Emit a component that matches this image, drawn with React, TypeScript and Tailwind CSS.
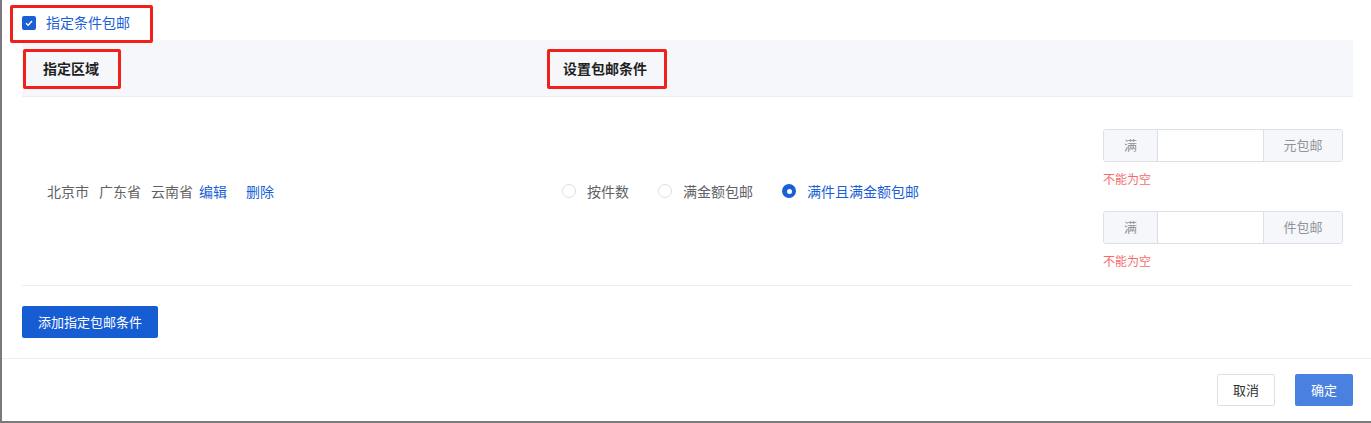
import React from "react"

const font = { fontFamily: '"Noto Sans CJK SC", "Noto Sans", sans-serif' }

function RedBox({ className }: { className: string }) {
  return <span className={`pointer-events-none absolute z-10 rounded-[2px] border-[3px] border-[#f0201a] ${className}`} />
}

function Radio({ label, checked }: { label: string; checked?: boolean }) {
  return (
    <label className="flex items-center gap-[11px]">
      {checked ? (
        <span className="flex h-[14px] w-[14px] items-center justify-center rounded-full bg-[#1a5fd6]">
          <span className="h-[5px] w-[5px] rounded-full bg-white" />
        </span>
      ) : (
        <span className="h-[14px] w-[14px] rounded-full border border-[#dcdfe6] bg-white" />
      )}
      <span className={checked ? "text-[#1a5fd6]" : "text-[#606266]"}>{label}</span>
    </label>
  )
}

function AmountInput({ suffix }: { suffix: string }) {
  return (
    <div>
      <div className="flex h-[33px] w-[240px] overflow-hidden rounded-[3px] border border-[#dcdfe6] text-[13px] text-[#909399]">
        <span className="flex w-[54px] items-center justify-center border-r border-[#dcdfe6] bg-[#f5f7fa]">满</span>
        <input className="w-[105px] bg-white px-2 outline-none" />
        <span className="flex flex-1 items-center justify-center border-l border-[#dcdfe6] bg-[#f5f7fa]">{suffix}</span>
      </div>
      <div className="mt-[8px] h-[18px] text-[12px] leading-[18px] text-[#f56c6c]">不能为空</div>
    </div>
  )
}

export default function App() {
  return (
    <div style={font} className="h-[423px] w-[1371px] overflow-hidden border-b-2 border-l-2 border-[#7a7a7a] bg-white text-[14px] text-[#303133]">
      <div className="relative z-10 flex h-[40px] items-center pt-[5px] pl-[20px]">
        <RedBox className="left-[8px] top-[5px] h-[38px] w-[143px]" />
        <span className="flex h-[14px] w-[14px] items-center justify-center rounded-[2px] bg-[#1a5fd6]">
          <svg width="10" height="10" viewBox="0 0 10 10" fill="none">
            <path d="M2 5.2 L4.2 7.3 L8 3" stroke="white" strokeWidth="1.4" />
          </svg>
        </span>
        <span className="ml-[10px] text-[#1a5fd6]">指定条件包邮</span>
      </div>

      <div className="mr-[18px] ml-[20px]">
        <div className="relative flex h-[57px] items-center border-b border-[#ebeef5] bg-[#f5f7fa] font-bold text-[#1f1f1f]">
          <RedBox className="left-[1px] top-[9px] h-[40px] w-[98px]" />
          <RedBox className="left-[525px] top-[9px] h-[40px] w-[120px]" />
          <div className="w-[520px] pl-[21px]">指定区域</div>
          <div className="w-[548px] pl-[21px]">设置包邮条件</div>
          <div className="flex-1" />
        </div>

        <div className="flex h-[189px] items-center border-b border-[#ebeef5]">
          <div className="flex w-[520px] items-center pl-[25px] text-[#606266]">
            <span>北京市</span>
            <span className="ml-[10px]">广东省</span>
            <span className="ml-[10px]">云南省</span>
            <span className="ml-[6px] text-[#1a5fd6]">编辑</span>
            <span className="ml-[19px] text-[#1a5fd6]">删除</span>
          </div>
          <div className="flex w-[548px] items-center gap-[29px] pl-[20px]">
            <Radio label="按件数" />
            <Radio label="满金额包邮" />
            <Radio label="满件且满金额包邮" checked />
          </div>
          <div className="flex flex-1 flex-col gap-[23px] pt-[16px] pl-[13px]">
            <AmountInput suffix="元包邮" />
            <AmountInput suffix="件包邮" />
          </div>
        </div>

        <div className="flex h-[72px] items-center">
          <button className="h-[32px] rounded-[2px] bg-[#165dd4] px-[16px] text-[13px] text-white">添加指定包邮条件</button>
        </div>
      </div>

      <div className="flex h-[62px] items-center justify-end gap-[20px] border-t border-[#ebeef5] pr-[18px]">
        <button className="h-[32px] w-[58px] rounded-[2px] border border-[#dcdfe6] bg-white text-[13px] text-[#303133]">取消</button>
        <button className="h-[32px] w-[58px] rounded-[2px] bg-[#4a80e0] text-[13px] text-white">确定</button>
      </div>
    </div>
  )
}
